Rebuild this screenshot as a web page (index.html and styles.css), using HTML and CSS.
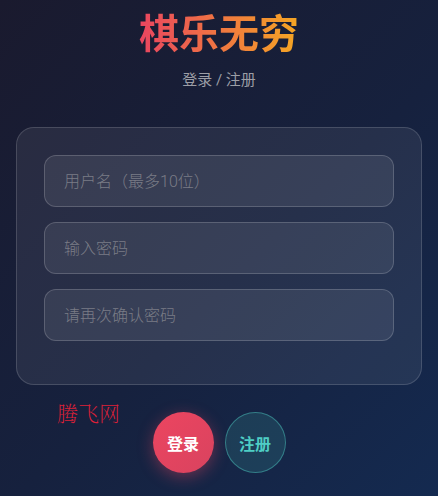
FILE: index.html
```html
<!DOCTYPE html>
<html lang="zh-CN">
<head>
    <meta charset="UTF-8">
    <meta name="viewport" content="width=device-width, initial-scale=1.0">
    <title>棋乐无穷 - 登录</title>
    <link rel="stylesheet" href="styles.css">
</head>
<body>
    <div class="page">
        <h1 class="title">棋乐无穷</h1>
        <p class="subtitle">登录 / 注册</p>

        <div class="card">
            <input type="text" class="field" placeholder="用户名（最多10位）">
            <input type="password" class="field" placeholder="输入密码">
            <input type="password" class="field" placeholder="请再次确认密码">
        </div>

        <div class="actions">
            <span class="brand">腾飞网</span>
            <button class="btn btn-login">登录</button>
            <button class="btn btn-register">注册</button>
        </div>
    </div>
</body>
</html>
```

FILE: styles.css
```css
* {
    box-sizing: border-box;
}

body {
    margin: 0;
    height: 100vh;
    overflow: hidden;
    font-family: Roboto, "Noto Sans CJK SC", sans-serif;
    background: linear-gradient(135deg, #1a1a2e 0%, #16213e 55%, #142a50 100%);
    color: #fff;
}

.page {
    display: flex;
    flex-direction: column;
    align-items: center;
    padding: 8px 16px 0;
}

.title {
    margin: 0;
    font-size: 40px;
    line-height: 54px;
    font-weight: 700;
    background: linear-gradient(90deg, #e94560, #f5a623);
    -webkit-background-clip: text;
    background-clip: text;
    color: transparent;
}

.subtitle {
    margin: 6px 0 0;
    font-size: 15px;
    line-height: 24px;
    color: #9c9ea6;
}

.card {
    width: 100%;
    margin-top: 35px;
    padding: 27px 27px 43px;
    display: flex;
    flex-direction: column;
    gap: 15px;
    background: rgba(255, 255, 255, 0.07);
    border: 1px solid rgba(255, 255, 255, 0.15);
    border-radius: 18px;
}

.field {
    width: 100%;
    height: 52px;
    padding: 0 19px;
    font-family: inherit;
    font-size: 16px;
    font-weight: 300;
    color: #fff;
    background: rgba(255, 255, 255, 0.08);
    border: 1px solid rgba(255, 255, 255, 0.18);
    border-radius: 12px;
    outline: none;
}

.field::placeholder {
    color: #7a7c86;
}

.actions {
    position: relative;
    width: 100%;
    display: flex;
    justify-content: center;
    gap: 11px;
    margin-top: 27px;
}

.brand {
    position: absolute;
    left: 41px;
    top: -15px;
    font-family: "Noto Serif CJK SC", serif;
    font-size: 21px;
    font-weight: 200;
    color: #dc2038;
}

.btn {
    width: 61px;
    height: 61px;
    border-radius: 50%;
    font-family: inherit;
    font-size: 16px;
    font-weight: 700;
    cursor: pointer;
}

.btn-login {
    border: none;
    color: #fff;
    background: linear-gradient(135deg, #ec4560, #d9435f);
    box-shadow: 0 4px 16px rgba(233, 69, 96, 0.4);
}

.btn-register {
    border: 1px solid rgba(78, 205, 196, 0.45);
    color: #4ecdc4;
    background: rgba(78, 205, 196, 0.15);
}
```
